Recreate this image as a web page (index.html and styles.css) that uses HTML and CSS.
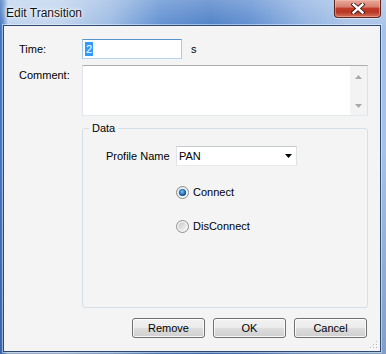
FILE: index.html
```html
<!DOCTYPE html>
<html>
<head>
<meta charset="utf-8">
<link rel="stylesheet" href="styles.css">
</head>
<body>
<div class="window">
  <div class="titlebar">
    <span class="title">Edit Transition</span>
    <div class="close">
      <svg width="14" height="11" viewBox="0 0 14 11">
        <path d="M2.5 1.5 L11.5 9.5 M11.5 1.5 L2.5 9.5" stroke="#3a1410" stroke-width="4.2" stroke-linecap="square" fill="none"/>
        <path d="M2.5 1.5 L11.5 9.5 M11.5 1.5 L2.5 9.5" stroke="#ffffff" stroke-width="2.4" stroke-linecap="square" fill="none"/>
      </svg>
    </div>
  </div>
  <div class="client">
    <div class="row time-row">
      <span class="lbl">Time:</span>
      <div class="input focused"><span class="sel">2</span></div>
      <span class="unit">s</span>
    </div>
    <div class="row comment-row">
      <span class="lbl lbl-top">Comment:</span>
      <div class="textarea">
        <div class="scroll">
          <svg width="7" height="4" viewBox="0 0 7 4"><path d="M0 4 L3.5 0 L7 4 Z" fill="#a8a8a8"/></svg>
          <svg width="7" height="4" viewBox="0 0 7 4"><path d="M0 0 L7 0 L3.5 4 Z" fill="#a8a8a8"/></svg>
        </div>
      </div>
    </div>
    <div class="group">
      <span class="legend">Data</span>
      <div class="profile-row">
        <span class="plbl">Profile Name</span>
        <div class="combo">
          <span>PAN</span>
          <svg width="7" height="4" viewBox="0 0 7 4"><path d="M0 0 L7 0 L3.5 4 Z" fill="#000"/></svg>
        </div>
      </div>
      <div class="radio r1">
        <svg width="13" height="13" viewBox="0 0 13 13">
          <defs>
            <linearGradient id="ring" x1="0" y1="0" x2="1" y2="1">
              <stop offset="0" stop-color="#e2e2e2"/>
              <stop offset="1" stop-color="#ffffff"/>
            </linearGradient>
            <radialGradient id="dot" cx="0.45" cy="0.4" r="0.6">
              <stop offset="0" stop-color="#8ccaf5"/>
              <stop offset="0.5" stop-color="#2f7fcc"/>
              <stop offset="1" stop-color="#0d3e74"/>
            </radialGradient>
          </defs>
          <circle cx="6.5" cy="6.5" r="6" fill="url(#ring)" stroke="#8a8a8a" stroke-width="1"/>
          <circle cx="6.5" cy="6.5" r="3.6" fill="url(#dot)"/>
        </svg>
        <span>Connect</span>
      </div>
      <div class="radio r2">
        <svg width="13" height="13" viewBox="0 0 13 13">
          <defs>
            <linearGradient id="ring2" x1="0" y1="0" x2="1" y2="1">
              <stop offset="0" stop-color="#c8c8c8"/>
              <stop offset="1" stop-color="#f6f6f6"/>
            </linearGradient>
          </defs>
          <circle cx="6.5" cy="6.5" r="6" fill="#f4f4f4" stroke="#8e8e8e" stroke-width="1"/>
          <circle cx="6.5" cy="6.5" r="4.2" fill="url(#ring2)"/>
        </svg>
        <span>DisConnect</span>
      </div>
    </div>
    <div class="buttons">
      <div class="btn">Remove</div>
      <div class="btn">OK</div>
      <div class="btn">Cancel</div>
    </div>
    <svg class="grip" width="8" height="8" viewBox="0 0 8 8">
      <g fill="#b8b8b8">
        <rect x="6" y="0" width="1" height="1"/>
        <rect x="3" y="3" width="1" height="1"/><rect x="6" y="3" width="1" height="1"/>
        <rect x="0" y="6" width="1" height="1"/><rect x="3" y="6" width="1" height="1"/><rect x="6" y="6" width="1" height="1"/>
      </g>
      <g fill="#ffffff">
        <rect x="7" y="1" width="1" height="1"/>
        <rect x="4" y="4" width="1" height="1"/><rect x="7" y="4" width="1" height="1"/>
        <rect x="1" y="7" width="1" height="1"/><rect x="4" y="7" width="1" height="1"/><rect x="7" y="7" width="1" height="1"/>
      </g>
    </svg>
  </div>
</div>
</body>
</html>
```
FILE: styles.css
```css
html, body {
  margin: 0;
  padding: 0;
}
body {
  width: 386px;
  height: 354px;
  overflow: hidden;
  font-family: "Liberation Sans", Arial, sans-serif;
  font-size: 11px;
  line-height: 13px;
  color: #000;
}
.window {
  width: 386px;
  height: 354px;
  box-sizing: border-box;
  background:
    linear-gradient(180deg, rgba(255,255,255,0.25) 0px, rgba(255,255,255,0.05) 25px, rgba(0,0,0,0) 26px),
    linear-gradient(180deg, rgba(0,0,0,0) 0px, rgba(0,0,0,0) 150px, rgba(20,50,110,0.25) 354px),
    linear-gradient(90deg, #3e70bb 0px, #5a88cc 3px, #bdd2ed 8px, #bdd2ed 60px, #9ab9e3 110px, #5c8dd0 160px, #4a7dc6 210px, #5b8bcf 250px, #8aaee0 300px, #a8c3e8 350px, #a6c2e8 386px);
  display: flex;
  flex-direction: column;
}
.titlebar {
  height: 25px;
  display: flex;
  justify-content: space-between;
  align-items: flex-start;
  padding: 0 5px 0 6px;
}
.title {
  font-family: "Liberation Sans", Arial, sans-serif;
  font-size: 12px;
  line-height: 14px;
  margin-top: 6px;
  color: #111;
  text-shadow: 0 0 6px #ffffff, 0 0 3px #ffffff, 0 0 1px rgba(255,255,255,0.9);
}
.close {
  width: 47px;
  height: 18px;
  box-sizing: border-box;
  border: 1px solid #5b2520;
  border-top: none;
  border-radius: 0 0 4px 4px;
  background: linear-gradient(180deg, #e9a99c 0%, #d9806f 40%, #c03c28 50%, #b73624 70%, #d4705a 100%);
  box-shadow: inset 0 0 0 1px rgba(255,200,190,0.45), 0 1px 0 rgba(255,255,255,0.5);
  display: flex;
  align-items: center;
  justify-content: center;
}
.close svg {
  display: block;
  margin-top: -1px;
}
.client {
  position: relative;
  margin: 0 5px 2px 3px;
  height: 327px;
  box-sizing: border-box;
  border: 1px solid #2c4a74;
  box-shadow: 0 0 0 1px rgba(255,255,255,0.45);
  background: #f4f4f4;
  padding: 13px 0 0 15px;
}
.row {
  display: flex;
}
.time-row {
  align-items: center;
  height: 20px;
}
.lbl {
  width: 63px;
  flex: none;
}
.lbl-top {
  padding-top: 4px;
}
.input {
  width: 100px;
  height: 20px;
  box-sizing: border-box;
  background: #fff;
  border: 1px solid #abadb3;
  border-color: #abadb3 #dbdfe6 #e3e9ef #e2e3ea;
}
.input.focused {
  border-color: #5795cd #a8cbea #b7d5f0 #a8cbea;
}
.sel {
  display: inline-block;
  margin: 2px 0 0 2px;
  padding: 0 1px;
  height: 14px;
  line-height: 14px;
  background: #3399ff;
  color: #fff;
}
.unit {
  margin-left: 9px;
}
.comment-row {
  margin-top: 6px;
}
.textarea {
  width: 286px;
  height: 51px;
  box-sizing: border-box;
  background: #fff;
  border: 1px solid;
  border-color: #abadb3 #dbdfe6 #e3e9ef #e2e3ea;
  display: flex;
  justify-content: flex-end;
}
.scroll {
  width: 17px;
  height: 100%;
  background-color: #f3f3f3;
  background-image: radial-gradient(#e6e6e6 0.6px, transparent 0.7px);
  background-size: 2px 2px;
  display: flex;
  flex-direction: column;
  align-items: center;
  justify-content: space-between;
  padding: 9px 0 7px;
  box-sizing: border-box;
}
.scroll svg {
  display: block;
}
.group {
  position: relative;
  margin: 12px 0 0 63px;
  width: 286px;
  height: 180px;
  box-sizing: border-box;
  border: 1px solid #d5dfe5;
  border-radius: 3px;
  padding: 17px 0 0 23px;
}
.legend {
  position: absolute;
  left: 6px;
  top: -7px;
  padding: 0 3px;
  background: #f4f4f4;
}
.profile-row {
  display: flex;
  align-items: center;
  height: 20px;
}
.plbl {
  width: 70px;
  flex: none;
}
.combo {
  width: 121px;
  height: 20px;
  box-sizing: border-box;
  background: #fff;
  border: 1px solid;
  border-color: #c5c9d0 #dfe3e8 #e6eaee #dfe3e8;
  display: flex;
  align-items: center;
  justify-content: space-between;
  padding: 0 4px 0 2px;
}
.combo svg {
  display: block;
}
.radio {
  display: flex;
  align-items: center;
  height: 13px;
  padding-left: 70px;
}
.radio svg {
  display: block;
  flex: none;
}
.radio span {
  margin-left: 4px;
}
.r1 {
  margin-top: 20px;
}
.r2 {
  margin-top: 21px;
}
.buttons {
  display: flex;
  justify-content: flex-end;
  gap: 8px;
  margin: 10px 0 0 63px;
  width: 285px;
}
.btn {
  width: 73px;
  height: 20px;
  box-sizing: border-box;
  border: 1px solid #707070;
  border-radius: 3px;
  background: linear-gradient(180deg, #f2f2f2 0%, #ebebeb 48%, #dddddd 52%, #cfcfcf 100%);
  box-shadow: inset 0 0 0 1px rgba(255,255,255,0.8);
  display: flex;
  align-items: center;
  justify-content: center;
  color: #000;
}
.grip {
  position: absolute;
  right: 2px;
  bottom: 2px;
  display: block;
}
```
